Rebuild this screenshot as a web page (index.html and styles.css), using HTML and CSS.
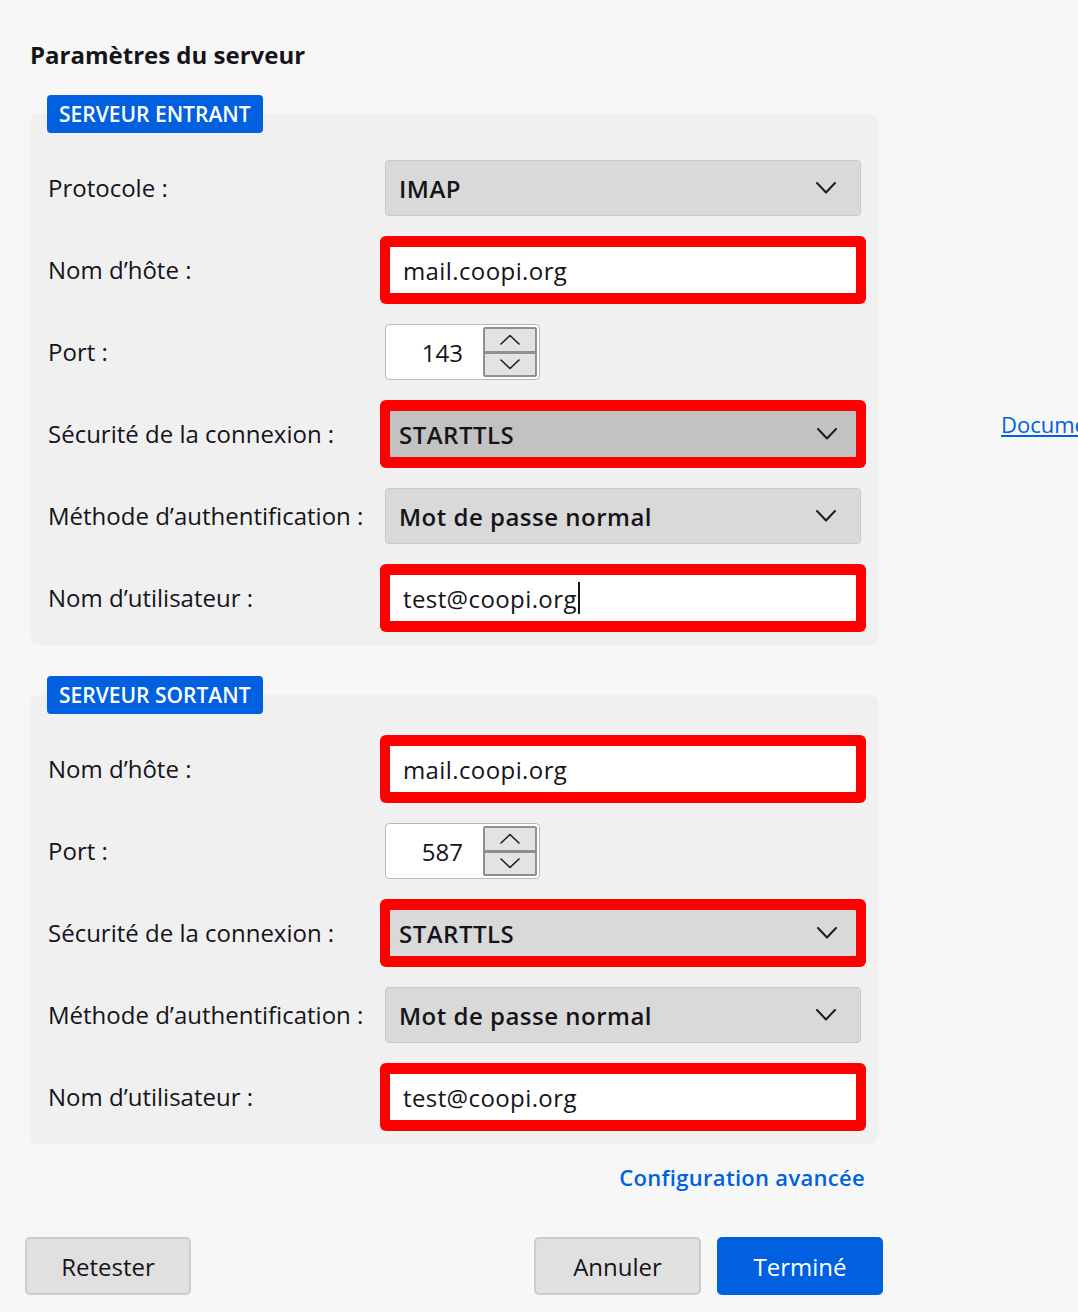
FILE: index.html
```html
<!DOCTYPE html>
<html lang="fr">
<head>
<meta charset="utf-8">
<title>Paramètres du serveur</title>
<link rel="stylesheet" href="styles.css">
</head>
<body>
<div class="page">
  <main class="main">
    <h1 class="title">Paramètres du serveur</h1>

    <fieldset class="group">
      <legend class="badge">SERVEUR ENTRANT</legend>
      <div class="grid">
        <label class="label">Protocole :</label>
        <div class="select"><span class="select-text">IMAP</span><svg class="chev" width="20" height="12" viewBox="0 0 20 12"><polyline points="1,1 10,10.5 19,1"/></svg></div>

        <label class="label">Nom d’hôte :</label>
        <div class="field marked"><span class="field-text">mail.coopi.org</span></div>

        <label class="label">Port :</label>
        <div class="spin">
          <span class="spin-value">143</span>
          <div class="spin-btns">
            <span class="spin-btn"><svg width="20" height="11" viewBox="0 0 20 11"><polyline points="1,10 10,1.5 19,10"/></svg></span>
            <span class="spin-btn"><svg width="20" height="11" viewBox="0 0 20 11"><polyline points="1,1 10,9.5 19,1"/></svg></span>
          </div>
        </div>

        <label class="label">Sécurité de la connexion :</label>
        <div class="select marked hover"><span class="select-text">STARTTLS</span><svg class="chev" width="20" height="12" viewBox="0 0 20 12"><polyline points="1,1 10,10.5 19,1"/></svg></div>

        <label class="label">Méthode d’authentification :</label>
        <div class="select"><span class="select-text">Mot de passe normal</span><svg class="chev" width="20" height="12" viewBox="0 0 20 12"><polyline points="1,1 10,10.5 19,1"/></svg></div>

        <label class="label">Nom d’utilisateur :</label>
        <div class="field marked"><span class="field-text">test@coopi.org</span><span class="caret"></span></div>
      </div>
    </fieldset>

    <fieldset class="group">
      <legend class="badge">SERVEUR SORTANT</legend>
      <div class="grid">
        <label class="label">Nom d’hôte :</label>
        <div class="field marked"><span class="field-text">mail.coopi.org</span></div>

        <label class="label">Port :</label>
        <div class="spin">
          <span class="spin-value">587</span>
          <div class="spin-btns">
            <span class="spin-btn"><svg width="20" height="11" viewBox="0 0 20 11"><polyline points="1,10 10,1.5 19,10"/></svg></span>
            <span class="spin-btn"><svg width="20" height="11" viewBox="0 0 20 11"><polyline points="1,1 10,9.5 19,1"/></svg></span>
          </div>
        </div>

        <label class="label">Sécurité de la connexion :</label>
        <div class="select marked"><span class="select-text">STARTTLS</span><svg class="chev" width="20" height="12" viewBox="0 0 20 12"><polyline points="1,1 10,10.5 19,1"/></svg></div>

        <label class="label">Méthode d’authentification :</label>
        <div class="select"><span class="select-text">Mot de passe normal</span><svg class="chev" width="20" height="12" viewBox="0 0 20 12"><polyline points="1,1 10,10.5 19,1"/></svg></div>

        <label class="label">Nom d’utilisateur :</label>
        <div class="field marked"><span class="field-text">test@coopi.org</span></div>
      </div>
    </fieldset>

    <div class="adv-row"><a class="adv-link" href="#">Configuration avancée</a></div>

    <div class="footer">
      <button class="btn">Retester</button>
      <div class="footer-right">
        <button class="btn btn-cancel">Annuler</button>
        <button class="btn btn-primary">Terminé</button>
      </div>
    </div>
  </main>

  <aside class="aside">
    <a class="doc-link" href="#">Documentation de configuration</a>
  </aside>
</div>
</body>
</html>
```

FILE: styles.css
```css
html, body {
  margin: 0;
  padding: 0;
  background: #f7f7f7;
  overflow: hidden;
}

body {
  font-family: "Open Sans", "Noto Sans", sans-serif;
  color: #15141a;
  width: 1078px;
  height: 1312px;
}

.page {
  display: flex;
  align-items: flex-start;
}

.main {
  width: 848px;
  flex: 0 0 848px;
  padding: 39px 0 0 30px;
}

.title {
  margin: 0 0 24px 0;
  font-size: 24px;
  line-height: 32px;
  font-weight: 700;
}

.group {
  margin: 0 0 31px 0;
  padding: 0 17px 19px 18px;
  border: 0;
  min-width: 0;
  background: #f0f0f0;
  border-radius: 8px;
}

.badge {
  margin-left: -1px;
  padding: 0 12px;
  height: 38px;
  line-height: 38px;
  background: #0060df;
  color: #fff;
  border-radius: 4px;
  font-size: 21px;
  font-weight: 600;
}

.grid {
  display: grid;
  grid-template-columns: 337px 476px;
  grid-auto-rows: 56px;
  row-gap: 26px;
  align-items: center;
  padding-top: 27px;
}

.label {
  font-size: 24px;
  line-height: 32px;
  white-space: nowrap;
}

.select {
  box-sizing: border-box;
  height: 56px;
  display: flex;
  align-items: center;
  justify-content: space-between;
  padding: 0 24px 0 13px;
  background: #d9d9d9;
  border: 1px solid #c8c8c8;
  border-radius: 4px;
}

.select-text {
  font-size: 24px;
  font-weight: 600;
  letter-spacing: 0.5px;
}

.chev polyline,
.spin-btn polyline {
  fill: none;
  stroke: #1c1b22;
  stroke-width: 2;
  stroke-linecap: round;
  stroke-linejoin: round;
}

.field {
  box-sizing: border-box;
  height: 56px;
  display: flex;
  align-items: center;
  padding: 0 13px;
  background: #fff;
  border: 1px solid #b8b8b8;
  border-radius: 4px;
}

.field-text {
  font-size: 24px;
  letter-spacing: 0.4px;
}

.caret {
  width: 2px;
  height: 32px;
  background: #15141a;
  margin-left: 1px;
}

.marked {
  border-color: #ff0000;
  border-width: 5px;
  border-radius: 2px;
  box-shadow: 0 0 0 5px #ff0000, 0 1px 0 5px #ff0000, 0 -1px 0 5px #ff0000;
  padding-left: 13px;
}

.select.marked {
  padding-left: 9px;
  padding-right: 19px;
}

.select.hover {
  background: #c2c2c2;
}

.spin {
  box-sizing: border-box;
  width: 155px;
  height: 56px;
  display: flex;
  align-items: stretch;
  background: #fff;
  border: 1px solid #b8b8b8;
  border-radius: 4px;
  padding: 2px 2px 2px 0;
}

.spin-value {
  flex: 1;
  display: flex;
  align-items: center;
  justify-content: flex-end;
  padding-right: 20px;
  font-size: 24px;
}

.spin-btns {
  width: 54px;
  display: flex;
  flex-direction: column;
  background: #8f8f8f;
  border: 2px solid #8f8f8f;
  box-sizing: border-box;
  gap: 3px;
  border-radius: 2px;
}

.spin-btn {
  flex: 1;
  display: flex;
  align-items: center;
  justify-content: center;
  background: #e3e3e3;
}

.spin-btn polyline {
  stroke-width: 1.6;
}

.adv-row {
  display: flex;
  justify-content: flex-end;
  padding-right: 13px;
  margin-top: -14px;
}

.adv-link {
  font-size: 22px;
  line-height: 32px;
  font-weight: 600;
  color: #0061e0;
  text-decoration: none;
  letter-spacing: 0.3px;
}

.footer {
  display: flex;
  justify-content: space-between;
  margin: 44px -5px 0 -5px;
}

.footer-right {
  display: flex;
  gap: 16px;
}

.btn {
  box-sizing: border-box;
  width: 166px;
  height: 58px;
  font-family: inherit;
  font-size: 24px;
  color: #15141a;
  background: #e0e0e0;
  border: 2px solid #cccccc;
  border-radius: 5px;
  padding: 0;
}

.btn-cancel {
  width: 167px;
}

.btn-primary {
  background: #0060df;
  border-color: #0060df;
  color: #fff;
}

.aside {
  margin-left: 123px;
  padding-top: 408px;
  white-space: nowrap;
}

.doc-link {
  font-size: 22px;
  line-height: 32px;
  color: #0061e0;
  text-decoration: underline;
}
```
